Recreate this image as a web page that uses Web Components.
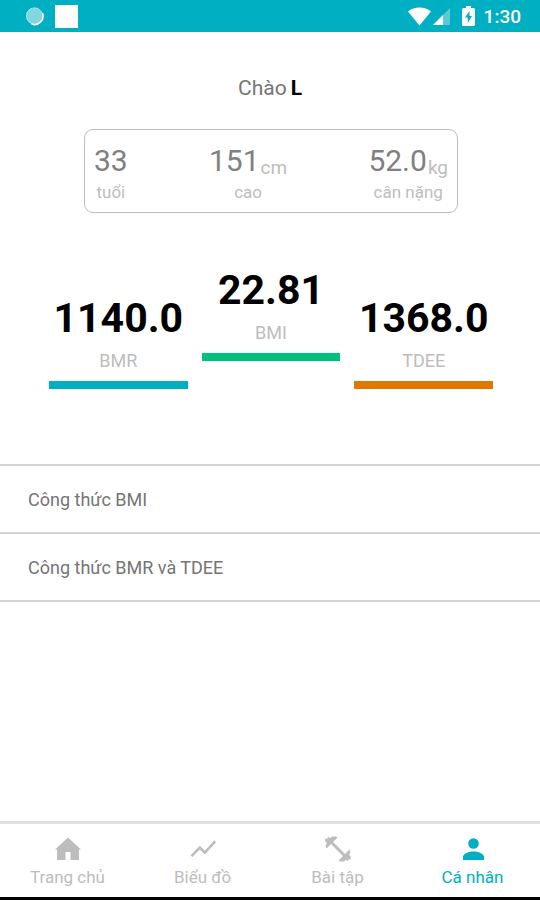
<!DOCTYPE html>
<html lang="vi">
<head>
<meta charset="utf-8">
<meta name="viewport" content="width=device-width, initial-scale=1">
<title>Cá nhân</title>
<style>
  body {
    margin: 0;
    background: #fff;
    font-family: Roboto, "Noto Sans", sans-serif;
    --primary: #00afc1;
    --text: #757575;
    --muted: #bdbdbd;
    --line: #d3d3d3;
  }
</style>
</head>
<body>
<profile-app></profile-app>

<script>
class StatusBar extends HTMLElement {
  constructor() {
    super();
    this.attachShadow({ mode: 'open' });
  }

  connectedCallback() {
    this.shadowRoot.innerHTML = `
      <style>
        :host {
          display: flex;
          justify-content: space-between;
          align-items: center;
          box-sizing: border-box;
          height: 32px;
          padding: 0 19px 0 25px;
          background: var(--primary);
          color: #fff;
          font-size: 19px;
          font-weight: 500;
        }

        div {
          display: flex;
          align-items: center;
        }

        .left { gap: 10px; }
        svg { display: block; }
        .battery { margin: 0 9px 0 11px; }
      </style>

      <div class="left">
        <svg width="20" height="20" viewBox="0 0 20 20">
          <circle cx="9.500" cy="10" r="8.500" fill="#7fd7e0"/>
          <circle cx="9.500" cy="10" r="8" fill="none" stroke="#b5e8ed" stroke-dasharray="2 1"/>
          <path d="M17.500 7a8.500 8.500 0 0 1-11 11" fill="none" stroke="#fff" stroke-width="1.500"/>
        </svg>
        <svg width="23" height="23" viewBox="0 0 23 23"><path d="M0 0h23v23H0z" fill="#fff"/></svg>
      </div>
      <div>
        <svg width="23" height="19" viewBox="0 0 23 19"><path d="M0 4.500C6-1 17-1 23 4.500L11.500 18.500z" fill="#fff"/></svg>
        <svg width="20" height="19" viewBox="0 0 20 19">
          <path d="M19 1v17H2z" fill="#fff" opacity=".35"/>
          <path d="M12 8v10H2z" fill="#fff"/>
        </svg>
        <svg class="battery" width="13" height="20" viewBox="0 0 13 20">
          <path d="M4 0h5v2h2.500a1.500 1.500 0 0 1 1.500 1.500v15a1.500 1.500 0 0 1-1.500 1.500h-10A1.500 1.500 0 0 1 0 18.500v-15A1.500 1.500 0 0 1 1.500 2H4z" fill="#fff"/>
          <path d="M7.500 5 3 11.500h2.800V17L10 10H7.500z" fill="#00afc1"/>
        </svg>
        <span>1:30</span>
      </div>
    `;
  }
}

class BodyFact extends HTMLElement {
  constructor() {
    super();
    this.attachShadow({ mode: 'open' });
  }

  connectedCallback() {
    const unit = this.getAttribute('unit');
    this.shadowRoot.innerHTML = `
      <style>
        :host {
          display: flex;
          flex-direction: column;
          align-items: center;
          gap: 2px;
        }

        .value {
          display: flex;
          align-items: flex-end;
          gap: 1px;
          font-size: 30px;
          line-height: 36px;
          color: #808080;
        }

        .unit {
          font-size: 19px;
          line-height: 22px;
          color: var(--muted);
        }

        .label {
          font-size: 17px;
          line-height: 22px;
          color: var(--muted);
        }
      </style>

      <div class="value"><slot></slot>${unit ? `<span class="unit">${unit}</span>` : ''}</div>
      <div class="label">${this.getAttribute('label')}</div>
    `;
  }
}

class HealthIndex extends HTMLElement {
  constructor() {
    super();
    this.attachShadow({ mode: 'open' });
  }

  connectedCallback() {
    this.shadowRoot.innerHTML = `
      <style>
        :host {
          display: block;
          flex: 1;
          text-align: center;
        }

        .value {
          font-size: 41px;
          line-height: 48px;
          font-weight: bold;
          color: #000;
        }

        .label {
          padding: 8px 0 9px;
          font-size: 18px;
          line-height: 22px;
          color: var(--muted);
        }

        .bar {
          height: 8px;
          background: ${this.getAttribute('color')};
        }
      </style>

      <div class="value"><slot></slot></div>
      <div class="label">${this.getAttribute('label')}</div>
      <div class="bar"></div>
    `;
  }
}

class FormulaItem extends HTMLElement {
  constructor() {
    super();
    this.attachShadow({ mode: 'open' });
  }

  connectedCallback() {
    this.shadowRoot.innerHTML = `
      <style>
        :host {
          display: block;
          border-bottom: 2px solid var(--line);
        }

        button {
          display: block;
          width: 100%;
          padding: 23px 28px 21px;
          border: 0;
          background: none;
          color: var(--text);
          font: inherit;
          font-size: 18px;
          line-height: 22px;
          text-align: left;
        }
      </style>

      <button type="button"><slot></slot></button>
    `;
  }
}

class NavItem extends HTMLElement {
  constructor() {
    super();
    this.attachShadow({ mode: 'open' });
  }

  connectedCallback() {
    this.shadowRoot.innerHTML = `
      <style>
        :host {
          display: block;
          flex: 1;
          color: var(--muted);
        }

        :host([active]) { color: var(--primary); }

        a {
          display: flex;
          flex-direction: column;
          align-items: center;
          gap: 2px;
          padding: 10px 0 9px;
          color: inherit;
          font-size: 17px;
          line-height: 22px;
          text-decoration: none;
        }
      </style>

      <a href="#${this.getAttribute('to')}"><slot name="icon"></slot><slot></slot></a>
    `;
  }
}

class ProfileApp extends HTMLElement {
  constructor() {
    super();
    this.attachShadow({ mode: 'open' });
  }

  connectedCallback() {
    this.shadowRoot.innerHTML = `
      <style>
        :host {
          display: flex;
          flex-direction: column;
          min-height: 100vh;
        }

        main { flex: 1; }

        h1 {
          display: flex;
          justify-content: center;
          gap: 4px;
          margin: 43px 0 28px;
          font-size: 21px;
          line-height: 26px;
          font-weight: normal;
          color: var(--text);
        }

        h1 b { color: #000; }

        .facts {
          display: flex;
          justify-content: space-between;
          margin: 0 82px 0 84px;
          padding: 13px 9px 9px;
          border: 1px solid var(--muted);
          border-radius: 9px;
        }

        .indexes {
          display: flex;
          align-items: flex-end;
          gap: 14px;
          margin: 53px 47px 75px 49px;
        }

        .raised { margin-bottom: 28px; }

        .formulas { border-top: 2px solid var(--line); }

        nav {
          display: flex;
          border-top: 3px solid #e0e0e0;
          border-bottom: 3px solid #000;
        }

        nav svg {
          display: block;
          fill: currentColor;
        }
      </style>

      <status-bar></status-bar>
      <main>
        <h1>Chào <b>L</b></h1>
        <div class="facts">
          <body-fact label="tuổi">33</body-fact>
          <body-fact label="cao" unit="cm">151</body-fact>
          <body-fact label="cân nặng" unit="kg">52.0</body-fact>
        </div>
        <div class="indexes">
          <health-index label="BMR" color="#00afc1">1140.0</health-index>
          <health-index class="raised" label="BMI" color="#00c27c">22.81</health-index>
          <health-index label="TDEE" color="#e07800">1368.0</health-index>
        </div>
        <div class="formulas">
          <formula-item>Công thức BMI</formula-item>
          <formula-item>Công thức BMR và TDEE</formula-item>
        </div>
      </main>
      <nav>
        <nav-item to="home">
          <svg slot="icon" width="30" height="30" viewBox="0 0 30 30"><path d="M12.500 26v-8h5v8H26V15.500h2L15 3.500 2 15.500h2V26z"/></svg>
          Trang chủ
        </nav-item>
        <nav-item to="chart">
          <svg slot="icon" width="30" height="30" viewBox="0 0 24 24"><path d="m3.500 18.490 6-6.010 4 4L22.500 6.500l-1.410-1.410-7.590 8.390-4-4L2 16.990z"/></svg>
          Biểu đồ
        </nav-item>
        <nav-item to="workout">
          <svg slot="icon" width="30" height="30" viewBox="0 0 30 30">
            <path d="M7 7 23 23" fill="none" stroke="currentColor" stroke-width="3"/>
            <path d="M2 4.500 4 5 5 3 7.500 4 9 2.500h4l1.500 1L3.500 14.500 2.500 12 4 9 2.500 8z"/>
            <path d="M28 25.500 26 25 25 27 22.500 26 21 27.500h-4l-1.500-1L26.500 15.500 27.500 18 26 21 27.500 22z"/>
          </svg>
          Bài tập
        </nav-item>
        <nav-item to="profile" active>
          <svg slot="icon" width="30" height="30" viewBox="0 0 30 30"><circle cx="15.500" cy="9.500" r="5.300"/><path d="M5 26v-3c0-3.500 6-5.500 10.500-5.500S26 19.500 26 23v3z"/></svg>
          Cá nhân
        </nav-item>
      </nav>
    `;
  }
}

customElements.define('status-bar', StatusBar);
customElements.define('body-fact', BodyFact);
customElements.define('health-index', HealthIndex);
customElements.define('formula-item', FormulaItem);
customElements.define('nav-item', NavItem);
customElements.define('profile-app', ProfileApp);
</script>
</body>
</html>
